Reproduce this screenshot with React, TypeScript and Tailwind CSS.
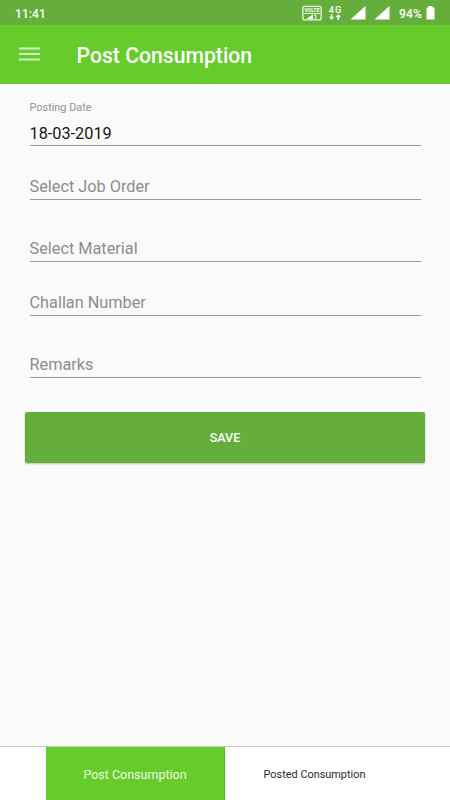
import React from 'react';

type FieldProps = { label: string; className: string; value?: string };

function Field({ label, className, value }: FieldProps) {
  return (
    <div className={`flex flex-col justify-end border-b border-[#999999] ${className}`}>
      {value ? (
        <>
          <span className="text-[10.9px] leading-[14px] text-[#929292]">{label}</span>
          <span className="mt-[9px] pb-px text-[16.3px] leading-[20px] text-[#161616]">{value}</span>
        </>
      ) : (
        <span className="pb-[2px] text-[16.3px] leading-[20px] text-[#8d8d8d]">{label}</span>
      )}
    </div>
  );
}

function VolteIcon() {
  return (
    <svg width="20" height="16" viewBox="0 0 20 16" className="shrink-0 overflow-visible">
      <rect x="0.9" y="1.4" width="18.2" height="13.4" rx="1" fill="none" stroke="#e9f5e2" strokeWidth="1.3" />
      <text x="2.5" y="7.2" fontSize="6.2" fontWeight="700" fill="#fff" textLength="15" lengthAdjust="spacingAndGlyphs">VOLTE</text>
      <path d="M1.5 8.5h17" stroke="#e9f5e2" />
      <path d="M4.5 14h6.5V9.2z" fill="#fff" />
      <path d="M12.2 10.2l1.6-.5v4.3" fill="none" stroke="#fff" />
    </svg>
  );
}

function NetworkIcon() {
  return (
    <svg width="14" height="16" viewBox="0 0 14 16" className="shrink-0 overflow-visible">
      <text x="0.7" y="7.5" fontSize="9.2" fontWeight="500" fill="#fff" textLength="12.5">4G</text>
      <path d="M3.6 9v3.5M10.3 15v-3.5" stroke="#fff" strokeWidth="1.4" />
      <path d="M1 11.8h5.2l-2.6 3.2zM7.7 12.2h5.2l-2.6-3.2z" fill="#fff" />
    </svg>
  );
}

function SignalIcon({ className }: { className: string }) {
  return (
    <svg width="16" height="14" viewBox="0 0 16 14" className={`shrink-0 ${className}`}>
      <path d="M.5 13.6L15.5 0V13.6z" fill="#fff" />
    </svg>
  );
}

export default function App() {
  return (
    <div className="flex h-[800px] w-[450px] flex-col overflow-hidden bg-[#fafafa] font-['Roboto',sans-serif]">
      <div className="flex h-[25px] shrink-0 items-center bg-[#66ae3c] pl-[15px] text-white">
        <span className="w-[287px] pt-[2px] text-[12px] leading-[16px] font-medium tracking-[0.1px]">11:41</span>
        <VolteIcon />
        <div className="ml-[6px] flex"><NetworkIcon /></div>
        <SignalIcon className="ml-[8px]" />
        <SignalIcon className="ml-[8px]" />
        <span className="ml-[9px] w-[26px] pt-[2px] text-[12px] leading-[16px] font-medium tracking-[0.2px] whitespace-nowrap">94%</span>
        <svg width="9" height="14" viewBox="0 0 9 14" className="mt-px ml-px shrink-0">
          <path d="M2.5 0h4v1.5H8q.5 0 .5.5v11q0 .5-.5.5H1q-.5 0-.5-.5V2q0-.5.5-.5h1.5z" fill="#fff" />
        </svg>
      </div>

      <header className="flex h-[58.5px] shrink-0 items-center bg-[#65cc2b] pl-[19px]">
        <svg width="21" height="14" viewBox="0 0 21 14" className="shrink-0">
          <path d="M0 1.5h21M0 7h21M0 12.5h21" stroke="#d5f1c6" strokeWidth="2" />
        </svg>
        <h1 className="ml-[36.5px] pt-[3px] text-[21.2px] leading-[28px] font-medium text-white">Post Consumption</h1>
      </header>

      <main className="flex flex-1 flex-col">
        <div className="mx-[29.5px] flex flex-col">
          <Field label="Posting Date" value="18-03-2019" className="h-[62.5px]" />
          <Field label="Select Job Order" className="h-[54px]" />
          <Field label="Select Material" className="h-[62px]" />
          <Field label="Challan Number" className="h-[54px]" />
          <Field label="Remarks" className="h-[62px]" />
        </div>
        <button className="mx-[25.4px] mt-[34px] h-[51px] rounded-[2px] bg-[#66ae3c] pt-[2px] text-[12.5px] font-medium text-white shadow-[0_1px_2px_rgba(0,0,0,0.25)]">
          SAVE
        </button>
      </main>

      <nav className="flex h-[54px] shrink-0 border-t border-[#c9c9c9] bg-white pl-[46px]">
        <button className="w-[179px] border-r border-[#35cb12] bg-[#65cc2b] pt-[3px] text-[12.5px] text-[#effae8]">Post Consumption</button>
        <button className="w-[179px] pt-[3px] text-[10.9px] text-[#292929]">Posted Consumption</button>
      </nav>
    </div>
  );
}
